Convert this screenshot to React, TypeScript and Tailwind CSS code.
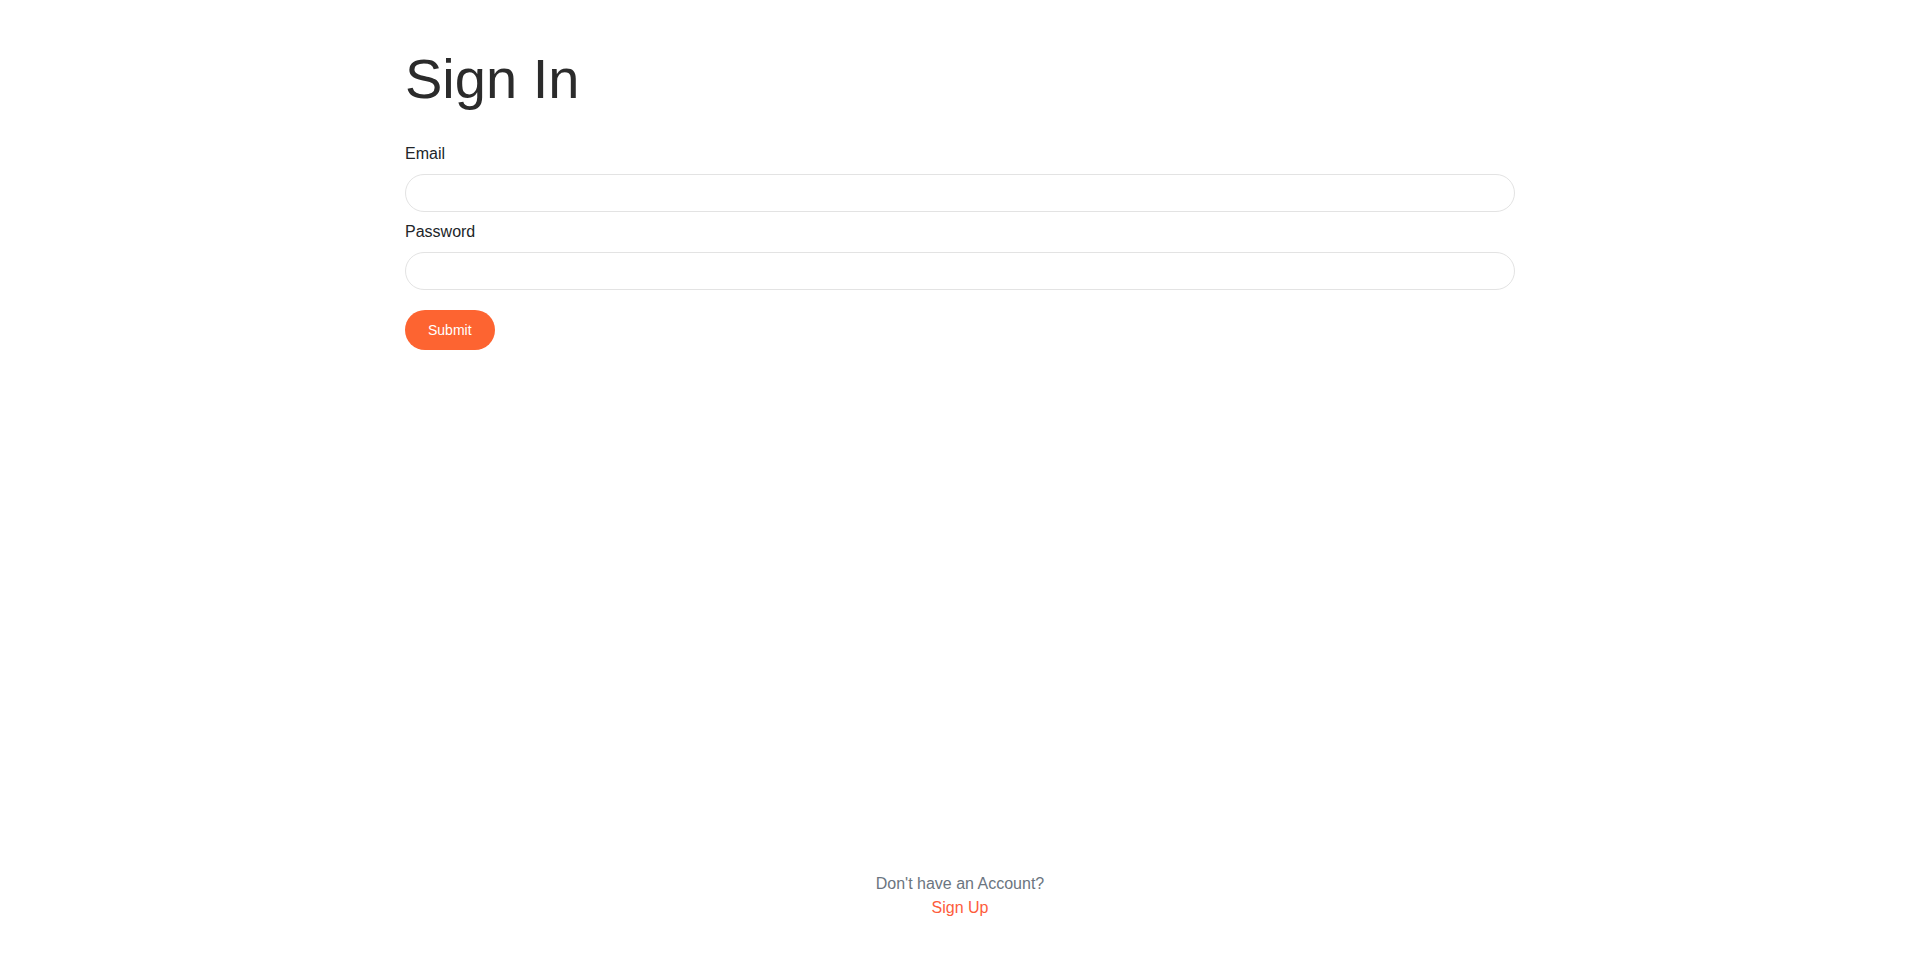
import React from "react";

export default function App() {
    return (
        <div className="min-h-screen flex flex-col bg-white font-['Liberation_Sans',Arial,sans-serif]">
            <main className="w-[1110px] mx-auto flex-1">
                <h1 className="mt-[45px] mb-[30px] text-[56px] leading-[67px] font-normal text-[#2b2b2b]">Sign In</h1>

                <form className="flex flex-col" onSubmit={(e) => e.preventDefault()}>
                    <label className="text-[16px] leading-[24px] text-[#212529] mb-[8px]">Email</label>
                    <input
                        type="email"
                        className="h-[38px] w-full rounded-full border border-[#e3e3e3] px-4 outline-none"
                    />

                    <label className="mt-[8px] text-[16px] leading-[24px] text-[#212529] mb-[8px]">Password</label>
                    <input
                        type="password"
                        className="h-[38px] w-full rounded-full border border-[#e3e3e3] px-4 outline-none"
                    />

                    <div className="mt-[20px]">
                        <button
                            type="submit"
                            className="h-[40px] px-[23px] rounded-full bg-[#fd6431] text-white text-[14px]"
                        >
                            Submit
                        </button>
                    </div>
                </form>
            </main>

            <footer className="pb-[49px] flex flex-col items-center text-[16px] leading-[24px]">
                <span className="text-[#6b7580]">Don&apos;t have an Account?</span>
                <a href="#" className="text-[#fd5c3c]">Sign Up</a>
            </footer>
        </div>
    );
}
